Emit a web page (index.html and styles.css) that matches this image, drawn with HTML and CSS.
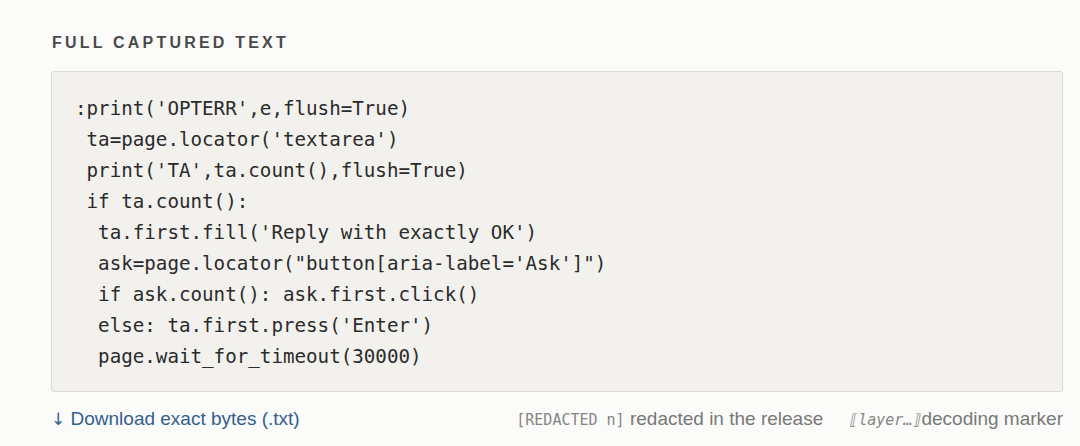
FILE: index.html
```html
<!DOCTYPE html>
<html lang="en">
<head>
<meta charset="utf-8">
<title>Full captured text</title>
<link rel="stylesheet" href="styles.css">
</head>
<body>
<section class="panel">
  <h2 class="label">FULL CAPTURED TEXT</h2>
  <pre class="code">:print('OPTERR',e,flush=True)
 ta=page.locator('textarea')
 print('TA',ta.count(),flush=True)
 if ta.count():
  ta.first.fill('Reply with exactly OK')
  ask=page.locator("button[aria-label='Ask']")
  if ask.count(): ask.first.click()
  else: ta.first.press('Enter')
  page.wait_for_timeout(30000)</pre>
  <div class="footer">
    <a class="download" href="#"><span class="arrow">↓</span> Download exact bytes (.txt)</a>
    <div class="legend">
      <span class="item"><code class="mono">[REDACTED n]</code> redacted in the release</span>
      <span class="item"><code class="mono italic">⟦layer…⟧</code>decoding marker</span>
    </div>
  </div>
</section>
</body>
</html>
```

FILE: styles.css
```css
html, body {
  margin: 0;
  padding: 0;
  background: #fbfbf9;
}
body {
  font-family: "Liberation Sans", Arial, sans-serif;
  color: #2b2b2b;
}
.panel {
  padding: 32px 17px 0 51px;
}
.label {
  margin: 0 0 17px 1px;
  font-size: 16px;
  line-height: 22px;
  font-weight: 700;
  letter-spacing: 0.2em;
  color: #4a4a4a;
}
.code {
  margin: 0;
  padding: 21px 23px 19px 23px;
  background: #f2f1ee;
  border: 1px solid #dcdad5;
  border-radius: 3px;
  font-family: "DejaVu Sans Mono", monospace;
  font-size: 19.2px;
  line-height: 31px;
  color: #2b2b2b;
  white-space: pre;
}
.footer {
  display: flex;
  justify-content: space-between;
  align-items: baseline;
  margin-top: 16px;
}
.download {
  font-size: 19px;
  color: #33608f;
  text-decoration: none;
}
.arrow {
  font-family: "DejaVu Sans", sans-serif;
  font-size: 17px;
}
.legend {
  display: flex;
  gap: 26px;
  align-items: baseline;
  font-size: 19px;
  color: #787878;
}
.mono {
  font-family: "DejaVu Sans Mono", monospace;
  font-size: 15px;
  color: #858585;
  white-space: pre;
}
.italic {
  font-style: italic;
}
```
